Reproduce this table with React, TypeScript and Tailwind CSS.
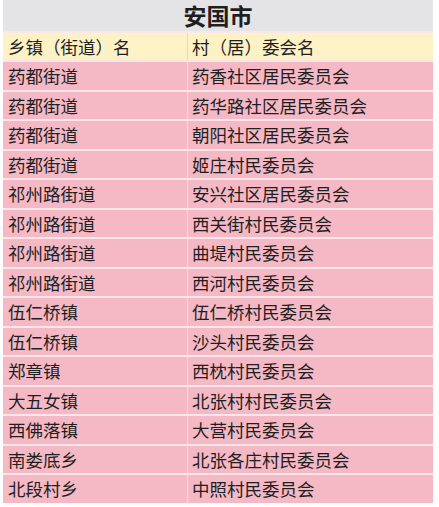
import React from "react";

const rows: [string, string][] = [
  ["药都街道", "药香社区居民委员会"],
  ["药都街道", "药华路社区居民委员会"],
  ["药都街道", "朝阳社区居民委员会"],
  ["药都街道", "姬庄村民委员会"],
  ["祁州路街道", "安兴社区居民委员会"],
  ["祁州路街道", "西关街村民委员会"],
  ["祁州路街道", "曲堤村民委员会"],
  ["祁州路街道", "西河村民委员会"],
  ["伍仁桥镇", "伍仁桥村民委员会"],
  ["伍仁桥镇", "沙头村民委员会"],
  ["郑章镇", "西枕村民委员会"],
  ["大五女镇", "北张村村民委员会"],
  ["西佛落镇", "大营村民委员会"],
  ["南娄底乡", "北张各庄村民委员会"],
  ["北段村乡", "中照村民委员会"],
];

const font = { fontFamily: '"Noto Sans CJK SC", "Noto Sans", sans-serif' };

export default function App() {
  return (
    <div className="w-[439px] h-[507px] bg-white text-[#1f1f1f]" style={font}>
      <div className="ml-[3px] w-[430px] flex flex-col gap-[2px] bg-[#fbe6ea]">
        {/* title */}
        <div className="h-[31px] bg-[#e4e4e6] text-center text-[23px] font-bold leading-[31px]">
          安国市
        </div>
        {/* header */}
        <div className="h-[27px] bg-[#fdf2c6] grid grid-cols-[185px_1fr] text-[17.5px] leading-none">
          <div className="flex items-center pl-[5px] border-r border-[#e8dcae]">乡镇（街道）名</div>
          <div className="flex items-center pl-[4px]">村（居）委会名</div>
        </div>
        {rows.map(([town, village], i) => (
          <div
            key={i}
            className="h-[27.5px] bg-[#f5b8c5] grid grid-cols-[185px_1fr] text-[17.5px] leading-none"
          >
            <div className="flex items-center pl-[5px] border-r border-[#fadbe2]">{town}</div>
            <div className="flex items-center pl-[4px]">{village}</div>
          </div>
        ))}
      </div>
    </div>
  );
}
